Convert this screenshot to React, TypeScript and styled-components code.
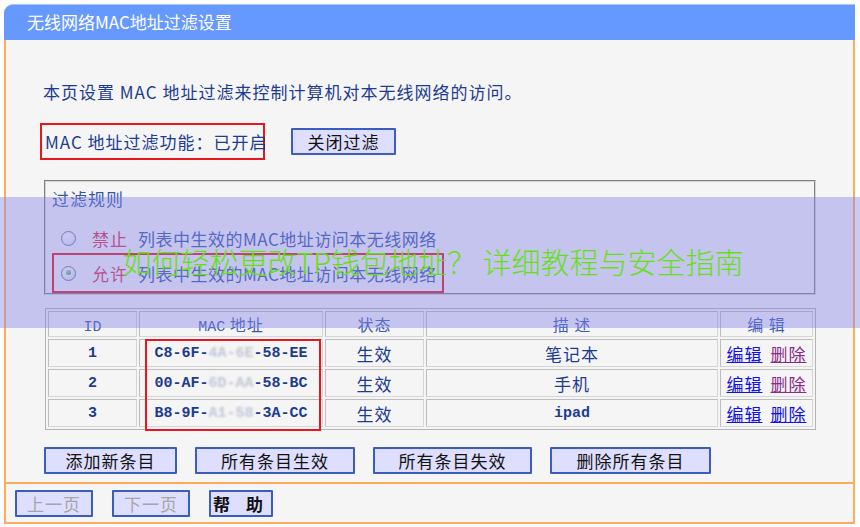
import React from 'react';
import styled, { createGlobalStyle } from 'styled-components';

const GlobalStyle = createGlobalStyle`
html, body {
  margin: 0;
  padding: 0;
  background: #ffffff;
}
body {
  font-family: "Noto Sans CJK SC", sans-serif;
}
`;

const Page = styled.div`
position: relative;
width: 860px;
height: 527px;
overflow: hidden;
box-sizing: border-box;
padding: 4px 0 0 4px;
`;

const Frame = styled.div`
width: 851px;
`;

const TitleBar = styled.div`
height: 36px;
box-sizing: border-box;
background: #6699ff;
border-top: 1px solid #a8c4ff;
border-radius: 9px 0 0 0;
color: #ffffff;
font-size: 17px;
line-height: 34px;
padding-left: 23px;
`;

const Body = styled.div`
background: #f5f5f5;
border-left: 2px solid #ffab5c;
border-right: 2px solid #ffab5c;
border-bottom: 2px solid #ffab5c;
padding: 40px 0 8px 34px;
color: #1c3c92;
font-size: 17px;
letter-spacing: 1px;
`;

const Intro = styled.div`
height: 24px;
line-height: 24px;
margin-left: 3px;
`;

const StatusRow = styled.div`
display: flex;
align-items: center;
margin-top: 19px;
`;

const RedBox = styled.div`
border: 2px solid #e8161e;
box-sizing: border-box;
`;

const StatusBox = styled(RedBox)`
width: 225px;
height: 37px;
line-height: 33px;
padding-left: 3px;
white-space: nowrap;
`;

const Button = styled.button<{ $w: number; $muted?: boolean; $bold?: boolean }>`
width: ${p => p.$w}px;
height: 27px;
box-sizing: border-box;
padding: 0;
background: #dedeff;
border: 2px solid #3b5dbf;
border-radius: 1px;
font-family: "Noto Sans CJK SC", sans-serif;
font-size: 17px;
line-height: 22px;
letter-spacing: ${p => (p.$bold ? '6px' : '1px')};
font-weight: ${p => (p.$bold ? 700 : 400)};
color: ${p => (p.$muted ? '#a6a6a6' : '#111111')};
cursor: pointer;
`;

const CloseButton = styled(Button)`
margin-left: 26px;
`;

const Rules = styled.div`
margin: 20px 0 0 4px;
width: 772px;
height: 115px;
box-sizing: border-box;
border: 2px groove #d4d4d4;
padding: 6px 0 0 6px;
color: #3656ac;
letter-spacing: 0.5px;
`;

const Legend = styled.div`
height: 22px;
line-height: 22px;
margin: 0 0 13px 0;
letter-spacing: 1px;
`;

const RuleRow = styled.div<{ $marked?: boolean }>`
display: inline-flex;
align-items: center;
box-sizing: border-box;
height: ${p => (p.$marked ? 40 : 30)}px;
padding: 0 5px 0 7px;
border: 2px solid ${p => (p.$marked ? '#e8161e' : 'transparent')};
white-space: nowrap;
`;

const RuleLine = styled.div``;

const Radio = styled.span<{ $checked?: boolean }>`
position: relative;
width: 15px;
height: 15px;
box-sizing: border-box;
border-radius: 50%;
border: 1.5px solid #6f7b96;
background: radial-gradient(circle at 40% 35%, #ffffff 0%, #eceef3 55%, #c9ced9 100%);
margin-right: 16px;
flex-shrink: 0;
&::after {
  content: '';
  display: ${p => (p.$checked ? 'block' : 'none')};
  position: absolute;
  left: 3.5px;
  top: 3.5px;
  width: 5px;
  height: 5px;
  border-radius: 50%;
  background: radial-gradient(circle at 40% 35%, #8fe0a0 0%, #2f9a4c 100%);
}
`;

const Verb = styled.span`
color: #e0304e;
margin-right: 10px;
letter-spacing: 1px;
`;

const TableWrap = styled.div`
position: relative;
margin: 13px 0 0 5px;
width: 771px;
`;

const Grid = styled.table`
width: 771px;
table-layout: fixed;
border-collapse: separate;
border-spacing: 2px;
border: 1px solid #b4b4b4;
`;

const HeadCell = styled.th<{ $w: number }>`
width: ${p => p.$w}px;
height: 25px;
box-sizing: border-box;
padding: 0;
border: 1px solid #bdbdbd;
border-right-color: #d6d6d6;
border-bottom-color: #d6d6d6;
color: #3a5cb4;
font-weight: 400;
font-size: 16px;
text-align: center;
`;

const Cell = styled.td<{ $mono?: boolean }>`
height: 28px;
box-sizing: border-box;
padding: 0;
border: 1px solid #bdbdbd;
border-right-color: #d6d6d6;
border-bottom-color: #d6d6d6;
text-align: center;
color: #1c3c92;
font-family: ${p => (p.$mono ? '"Liberation Mono", "Noto Sans CJK SC", monospace' : '"Noto Sans CJK SC", sans-serif')};
font-weight: ${p => (p.$mono ? 700 : 400)};
font-size: ${p => (p.$mono ? '15px' : '17px')};
letter-spacing: ${p => (p.$mono ? '0' : '1px')};
`;

const Mono = styled.span`
font-family: "Liberation Mono", monospace;
font-size: 15px;
letter-spacing: 0;
`;

const Hidden = styled.span`
color: #c3c8d8;
filter: blur(1.3px);
`;

const Link = styled.a<{ $visited?: boolean }>`
color: ${p => (p.$visited ? '#8a2a8a' : '#1010ee')};
text-decoration: underline;
cursor: pointer;
& + & {
  margin-left: 8px;
}
`;

const MacMark = styled(RedBox)`
position: absolute;
left: 100px;
top: 31px;
width: 176px;
height: 92px;
pointer-events: none;
`;

const ActionBar = styled.div`
display: flex;
gap: 18px;
margin: 17px 0 0 4px;
`;

const Footer = styled.div`
display: flex;
gap: 19px;
height: 40px;
box-sizing: border-box;
padding: 6px 0 0 9px;
background: #f5f5f5;
border-left: 2px solid #ffab5c;
border-right: 2px solid #ffab5c;
border-bottom: 2px solid #ffab5c;
`;

const Banner = styled.div`
position: absolute;
left: 0;
top: 197px;
width: 860px;
height: 131px;
background: rgba(130, 128, 232, 0.42);
display: flex;
align-items: center;
justify-content: center;
padding-bottom: 4px;
box-sizing: border-box;
`;

const BannerText = styled.div`
color: #66e012;
font-size: 29px;
line-height: 36px;
font-weight: 300;
white-space: nowrap;
margin-left: 6px;
`;

type Entry = {
  id: number;
  head: string;
  hidden: string;
  tail: string;
  desc: string;
  mono?: boolean;
  visited: boolean;
};

const entries: Entry[] = [
  { id: 1, head: 'C8-6F-', hidden: '4A-6E', tail: '-58-EE', desc: '笔记本', visited: true },
  { id: 2, head: '00-AF-', hidden: '6D-AA', tail: '-58-BC', desc: '手机', visited: true },
  { id: 3, head: 'B8-9F-', hidden: 'A1-58', tail: '-3A-CC', desc: 'ipad', mono: true, visited: false },
];

const App = () => {
  return (
    <Page>
      <GlobalStyle />
      <Frame>
        <TitleBar>无线网络MAC地址过滤设置</TitleBar>
        <Body>
          <Intro>本页设置 MAC 地址过滤来控制计算机对本无线网络的访问。</Intro>
          <StatusRow>
            <StatusBox>MAC 地址过滤功能：已开启</StatusBox>
            <CloseButton $w={105}>关闭过滤</CloseButton>
          </StatusRow>
          <Rules>
            <Legend>过滤规则</Legend>
            <RuleLine>
              <RuleRow>
                <Radio />
                <Verb>禁止</Verb>
                列表中生效的MAC地址访问本无线网络
              </RuleRow>
            </RuleLine>
            <RuleLine>
              <RuleRow $marked>
                <Radio $checked />
                <Verb>允许</Verb>
                列表中生效的MAC地址访问本无线网络
              </RuleRow>
            </RuleLine>
          </Rules>
          <TableWrap>
            <Grid>
              <thead>
                <tr>
                  <HeadCell $w={89}><Mono>ID</Mono></HeadCell>
                  <HeadCell $w={184}><Mono>MAC</Mono> 地址</HeadCell>
                  <HeadCell $w={99}>状态</HeadCell>
                  <HeadCell $w={292}>描 述</HeadCell>
                  <HeadCell $w={93}>编 辑</HeadCell>
                </tr>
              </thead>
              <tbody>
                {entries.map(e => (
                  <tr key={e.id}>
                    <Cell $mono>{e.id}</Cell>
                    <Cell $mono>
                      {e.head}
                      <Hidden>{e.hidden}</Hidden>
                      {e.tail}
                    </Cell>
                    <Cell>生效</Cell>
                    <Cell $mono={e.mono}>{e.desc}</Cell>
                    <Cell>
                      <Link>编辑</Link>
                      <Link $visited={e.visited}>删除</Link>
                    </Cell>
                  </tr>
                ))}
              </tbody>
            </Grid>
            <MacMark />
          </TableWrap>
          <ActionBar>
            <Button $w={133}>添加新条目</Button>
            <Button $w={160}>所有条目生效</Button>
            <Button $w={159}>所有条目失效</Button>
            <Button $w={161}>删除所有条目</Button>
          </ActionBar>
        </Body>
        <Footer>
          <Button $w={78} $muted>上一页</Button>
          <Button $w={78} $muted>下一页</Button>
          <Button $w={64} $bold>帮 助</Button>
        </Footer>
      </Frame>
      <Banner>
        <BannerText>如何轻松更改TP钱包地址？ 详细教程与安全指南</BannerText>
      </Banner>
    </Page>
  );
};

export default App;
